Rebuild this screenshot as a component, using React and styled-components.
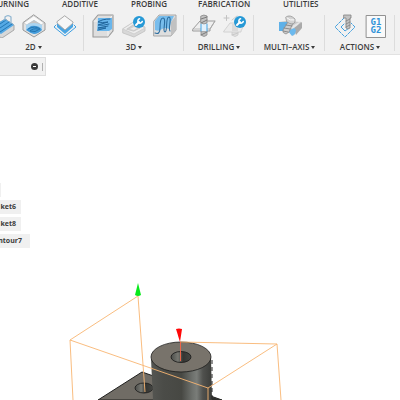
import React from 'react';
import styled, { createGlobalStyle } from 'styled-components';

const GlobalStyle = createGlobalStyle`
  * {
    box-sizing: border-box;
  }

  body {
    margin: 0;
    background: #ffffff;
    font-family: 'Open Sans', 'Noto Sans', sans-serif;
    color: #3c3c3c;
  }
`;

const Page = styled.div`
  display: flex;
  flex-direction: column;
  min-height: 100vh;
  overflow: hidden;
`;

const Toolbar = styled.header`
  background: #f1f1f1;
  border-bottom: 1px solid #e2e2e2;
  overflow: hidden;
`;

const Tabs = styled.nav`
  display: flex;
  gap: 33px;
  height: 14px;
`;

const Tab = styled.button`
  display: flex;
  justify-content: ${props => (props.$clipped ? 'flex-end' : 'flex-start')};
  flex: none;
  width: ${props => props.$width}px;
  height: 8px;
  padding: 0;
  border: 0;
  background: none;
  font: 600 8px/8px 'Open Sans', sans-serif;
  color: #3c3c3c;
  white-space: nowrap;
`;

const Groups = styled.div`
  display: flex;
  height: 40px;
  margin-left: -17px;
`;

const Group = styled.section`
  position: relative;
  display: flex;
  flex: none;
  flex-direction: column;
  align-items: center;
  gap: 4px;
  width: ${props => props.$width}px;

  &::after {
    content: '';
    position: absolute;
    top: 1px;
    right: 0;
    width: 1px;
    height: 36px;
    background: #dcdcdc;
  }
`;

const Tools = styled.div`
  display: flex;
  gap: 7px;
`;

const Tool = styled.button`
  width: 24px;
  height: 24px;
  padding: 0;
  border: 0;
  background: none;

  svg {
    display: block;
  }
`;

const MenuButton = styled.button`
  display: flex;
  align-items: center;
  gap: 2px;
  padding: 0;
  border: 0;
  background: none;
  font: 600 8px/10px 'Open Sans', sans-serif;
  color: #3c3c3c;
  white-space: nowrap;
`;

const Caret = styled.span`
  border: 2px solid transparent;
  border-top: 3px solid #3c3c3c;
  border-bottom: 0;
`;

const BrowserBar = styled.div`
  display: flex;
  align-items: center;
  justify-content: flex-end;
  gap: 4px;
  width: 46px;
  height: 19px;
  margin-top: 2px;
  border: solid #dedede;
  border-width: 1px 1px 1px 0;
  background: #f1f1f1;
`;

const Collapse = styled.button`
  display: flex;
  align-items: center;
  justify-content: center;
  width: 7px;
  height: 7px;
  padding: 0;
  border: 0;
  border-radius: 50%;
  background: #3a3a3a;

  &::before {
    content: '';
    width: 3px;
    height: 1px;
    background: #ffffff;
  }
`;

const Grip = styled.span`
  width: 3px;
  height: 8px;
  border-left: 1px solid #b0b0b0;
`;

const Tree = styled.ul`
  display: flex;
  flex-direction: column;
  gap: 3px;
  margin: 107px 0 0;
  padding: 0;
  list-style: none;
`;

const TreeItem = styled.li`
  display: flex;
  justify-content: flex-end;
  width: ${props => props.$width}px;
  height: 14px;
  padding-right: ${props => props.$pad}px;
  overflow: hidden;
  background: #f0f0f0;
  font-size: 7px;
  font-weight: 700;
  line-height: 14px;
  white-space: nowrap;
`;

const Model = styled.svg`
  display: block;
  width: 100%;
  height: auto;
  margin-top: 22px;
`;

const Icon = ({ children }) => (
  <svg width="24" height="24" viewBox="0 0 24 24" fill="none" strokeLinejoin="round" strokeLinecap="round">
    {children}
  </svg>
);

const FaceIcon = () => (
  <Icon>
    <path d="M0 14 14 5l9 6v5L11 24 0 19Z" fill="#d8d8d8" stroke="#9a9a9a" strokeWidth=".8" />
    <path d="M0 13 14 5l9 6-13 9L0 15Z" fill="#55a9e4" />
    <path d="m3 14 12-8M6 16l12-8M9 18l12-8" stroke="#2377b5" />
    <path d="M14 6V3q3-3 6 0v6" stroke="#8fb5d0" strokeWidth="1.2" />
  </Icon>
);

const PocketIcon = () => (
  <Icon>
    <path d="M12 1 23 9v7l-11 7L1 16V9Z" fill="#e2e2e2" stroke="#999" />
    <path d="m12 2 10 7-10 7L2 9Z" fill="#fafafa" stroke="#bdbdbd" strokeWidth=".6" />
    <path d="m12 6 8 5v5l-8 4-8-4v-5Z" fill="#a9d4f1" />
    <path d="m4 11 8-5 8 5q-8-4-16 0Z" fill="#c4c4c4" />
    <path d="m4 16 5-4q8-1 11 4-4 4-8 4-4-1-8-4Z" fill="#459cda" />
    <path d="M6 15q7-4 12 0-5 4-10 2 3-3 8-2" stroke="#1f70ab" strokeWidth=".9" />
  </Icon>
);

const ContourIcon = () => (
  <Icon>
    <path d="m3 11-2 2 11 9 11-9-2-2" stroke="#3e9fe2" />
    <path d="m4 9 8 7 8-7v4l-8 7-8-7Z" fill="#4ba6e3" />
    <path d="m12 2 8 6v1l-8 7-8-7V8Z" fill="#f7f7f7" stroke="#a0a0a0" strokeWidth=".9" />
  </Icon>
);

const AdaptiveIcon = () => (
  <Icon>
    <path d="M2 7 7 1h15v16l-5 6H2Z" fill="#dedede" stroke="#989898" strokeWidth="1.1" />
    <path d="M3 7h14v15M17 7l4-5" stroke="#fafafa" strokeWidth=".8" />
    <path d="M7 4h14v11l-3 2H6Z" fill="#69b6ec" />
    <path d="M19 5q-8 0-12 3 4 1 10 0L7 11q5 1 11-1M17 12 7 14h8l-8 2" stroke="#1f649b" />
  </Icon>
);

const Wrench = () => (
  <>
    <circle cx="17" cy="8" r="6" fill="#2699d6" />
    <path d="m14 11 3-3" stroke="#fff" strokeWidth="2" />
    <path d="M17.500 4.800a2.200 2.200 0 1 0 2.700 2.700" stroke="#fff" strokeWidth="1.600" />
  </>
);

const PocketClearIcon = () => (
  <Icon>
    <path d="m1 15 11-7 11 5v4l-11 6L1 19Z" fill="#d8d8d8" stroke="#c0c0c0" strokeWidth=".8" />
    <path d="m1 15 11 5 11-6-11-6Z" fill="#ededed" stroke="#cacaca" strokeWidth=".8" />
    <path d="m5 15 6-4 7 3-6 3Z" fill="#d0d0d0" stroke="#bdbdbd" strokeWidth=".7" />
    <path d="m8 15 4-2 3 1-3 2Z" fill="#ececec" />
    <Wrench />
  </Icon>
);

const ParallelIcon = () => (
  <Icon>
    <path d="m1 7 5-6h17v15l-5 6H1Z" fill="#dedede" stroke="#a0a0a0" strokeWidth=".9" />
    <path d="M2 7 6 2h15l-3 6-2 7q-4-2-7 0-3 3-7 1Z" fill="#78bdec" />
    <path d="m18 8 5-6v14l-5 6Z" fill="#c1c1c1" />
    <path d="M2 19q5 2 5-5 0-10 3-10c4 0-1 14 2 14S12 3 16 3c3 0-1 13 1 14" stroke="#2a6c9f" strokeWidth="1.1" />
  </Icon>
);

const DrillIcon = () => (
  <Icon>
    <path d="M9 16v5q3 3 6 0v-5Z" fill="#bdbdbd" stroke="#8b8b8b" strokeWidth=".8" />
    <path d="m9 21 6-3" stroke="#7b7b7b" />
    <path d="m1 15 7-8h15l-5 8v2H1Z" fill="#efefef" stroke="#929292" strokeWidth=".9" />
    <path d="M1 15h17l5-8" stroke="#acacac" strokeWidth=".8" />
    <path d="M9 8h6v9H9Z" fill="#e2f0fb" />
    <path d="M9 10v7M15 10v7" stroke="#43a3e4" />
    <path d="M9 2q3-2 6 0v7q-3 2-6 0Z" fill="#c3c3c3" stroke="#858585" strokeWidth=".8" />
    <path d="m9 5 6-2M9 9l6-3" stroke="#7b7b7b" />
  </Icon>
);

const DrillProbeIcon = () => (
  <Icon>
    <path d="M9 15v6q3 3 6 0v-6Z" fill="#e0e0e0" stroke="#cacaca" strokeWidth=".8" />
    <path d="m1 17 6-8h15l-4 8v1H1Z" fill="#ebebeb" stroke="#cbcbcb" strokeWidth=".8" />
    <path d="M9 10h6v7H9Z" fill="#dadada" />
    <path d="m9 21 6-2M9 6l5-4" stroke="#c9c9c9" />
    <path d="M1 4h5M3.500 1.500v5" stroke="#c2c2c2" />
    <Wrench />
  </Icon>
);

const MultiAxisIcon = () => (
  <Icon>
    <path d="m1 8 6-1 16 1v6l-8 8-5-5-9-1Z" fill="#c9c9c9" />
    <path d="M1 8h12l-3 9H1Z" fill="#5fb1e8" />
    <path d="m12 13 11-6-7 9Z" fill="#e5e5e5" />
    <path d="m16 14 8-6v6l-6 7Z" fill="#aaa" />
    <path d="m10 17 6-3 2 2-1 4-3 2Z" fill="#6bb9ee" />
    <path d="m10 8-5 8q-1 3 3 4l3-2 4-9Z" fill="#cdcdcd" stroke="#8f8f8f" strokeWidth=".8" />
    <path d="m8 11 6 1m-8 2 6 1m-7 2 5 1" stroke="#858585" strokeWidth=".9" />
    <path d="M8 3q4-3 9 2v3q-2 4-8 0Z" fill="#d3d3d3" stroke="#949494" strokeWidth=".8" />
    <path d="M9 4q3 3 7 2" stroke="#fff" strokeWidth=".9" />
  </Icon>
);

const SimulateIcon = () => (
  <Icon>
    <path d="M11 4 2 13l10 10 10-10-4-4" stroke="#45a1df" strokeDasharray="3 1.500" />
    <path d="m11 10-3 3 4 4 4-3" stroke="#45a1df" />
    <path d="M11 1h7v3h-1v10l-2 1-2-1V4h-2Z" fill="#c2c2c2" stroke="#828282" strokeWidth=".8" />
    <path d="m13 7 4-2m-4 5 4-2m-4 5 4-2" stroke="#808080" strokeWidth=".8" />
  </Icon>
);

const PostIcon = () => (
  <Icon>
    <path d="M2.500 1.500h19v22h-19Z" fill="#fafafa" stroke="#929292" />
    <text x="12" y="11" textAnchor="middle" fontFamily="DejaVu Sans Mono" fontSize="9" fontWeight="700" fill="#2f92d8">G1</text>
    <text x="12" y="19" textAnchor="middle" fontFamily="DejaVu Sans Mono" fontSize="9" fontWeight="700" fill="#2f92d8">G2</text>
  </Icon>
);

const tabs = [
  { label: 'URNING', width: 29, clipped: true },
  { label: 'ADDITIVE', width: 36 },
  { label: 'PROBING', width: 34 },
  { label: 'FABRICATION', width: 52 },
  { label: 'UTILITIES', width: 35 },
];

const groups = [
  { label: '2D', width: 101, tools: [['Face', FaceIcon], ['2D Pocket', PocketIcon], ['2D Contour', ContourIcon]] },
  { label: '3D', width: 100, tools: [['Adaptive Clearing', AdaptiveIcon], ['Pocket Clearing', PocketClearIcon], ['Parallel', ParallelIcon]] },
  { label: 'DRILLING', width: 70, tools: [['Drill', DrillIcon], ['Hole Recognition', DrillProbeIcon]] },
  { label: 'MULTI–AXIS', width: 71, tools: [['Swarf', MultiAxisIcon]] },
  { label: 'ACTIONS', width: 70, tools: [['Simulate', SimulateIcon], ['Post Process', PostIcon]] },
];

const operations = [
  { label: '', width: 1, pad: 0 },
  { label: 'ket6', width: 21, pad: 5 },
  { label: 'ket8', width: 21, pad: 5 },
  { label: 'ntour7', width: 30, pad: 8 },
];

const StockModel = () => (
  <Model viewBox="0 270 400 130" role="img" aria-label="Part inside its stock">
    <defs>
      <linearGradient id="boss" x1="0" x2="1">
        <stop offset="0" stopColor="#555652" />
        <stop offset=".2" stopColor="#4b4c48" />
        <stop offset=".5" stopColor="#474843" />
        <stop offset=".68" stopColor="#6e716d" />
        <stop offset=".75" stopColor="#7a7d79" />
        <stop offset=".85" stopColor="#50514e" />
        <stop offset="1" stopColor="#3b3c39" />
      </linearGradient>
      <linearGradient id="bore" x1="0" x2="1">
        <stop offset="0" stopColor="#4b4c49" />
        <stop offset=".35" stopColor="#777872" />
        <stop offset=".6" stopColor="#343532" />
        <stop offset="1" stopColor="#454643" />
      </linearGradient>
    </defs>
    <path d="M98 400 142 372 222 400Z" fill="#706c65" stroke="#20201f" />
    <ellipse cx="144" cy="388" rx="9" ry="5" fill="url(#bore)" stroke="#181818" strokeWidth=".8" />
    <path d="M151 359 153 400h59l-1-42Z" fill="url(#boss)" />
    <path d="M212 360v40" stroke="#252525" strokeDasharray="4 3" />
    <path d="m212 397 10 3h-10Z" fill="#2d2e2b" />
    <ellipse cx="181" cy="357" rx="30" ry="15" fill="#78736b" stroke="#1d1d1c" strokeWidth=".8" />
    <ellipse cx="181" cy="357" rx="10" ry="5.500" fill="url(#bore)" stroke="#181818" strokeWidth=".8" />
    <g fill="none" stroke="#f8b672" strokeWidth=".9">
      <path d="m73 400-3-60 68-44 7 96" />
      <path d="m70 340 138 48 69-44-97-2" />
      <path d="m277 344 4 56M208 388v12" />
    </g>
    <path d="M180.500 342v19" stroke="#ee6448" />
    <path d="m138 283 3 12q-3 2-6 0Z" fill="#08e91c" />
    <path d="M176 329q3-1 6 0l-2 13Z" fill="#ff0808" />
  </Model>
);

const App = () => {
  return (
    <Page>
      <GlobalStyle />
      <Toolbar>
        <Tabs>
          {tabs.map(tab => (
            <Tab key={tab.label} $width={tab.width} $clipped={tab.clipped}>{tab.label}</Tab>
          ))}
        </Tabs>
        <Groups>
          {groups.map(group => (
            <Group key={group.label} $width={group.width}>
              <Tools>
                {group.tools.map(([name, ToolIcon]) => (
                  <Tool key={name} aria-label={name}>
                    <ToolIcon />
                  </Tool>
                ))}
              </Tools>
              <MenuButton>
                {group.label}
                <Caret />
              </MenuButton>
            </Group>
          ))}
        </Groups>
      </Toolbar>

      <BrowserBar>
        <Collapse aria-label="Collapse browser" />
        <Grip />
      </BrowserBar>

      <Tree>
        {operations.map(item => (
          <TreeItem key={item.label} $width={item.width} $pad={item.pad}>{item.label}</TreeItem>
        ))}
      </Tree>

      <StockModel />
    </Page>
  );
};

export default App;
